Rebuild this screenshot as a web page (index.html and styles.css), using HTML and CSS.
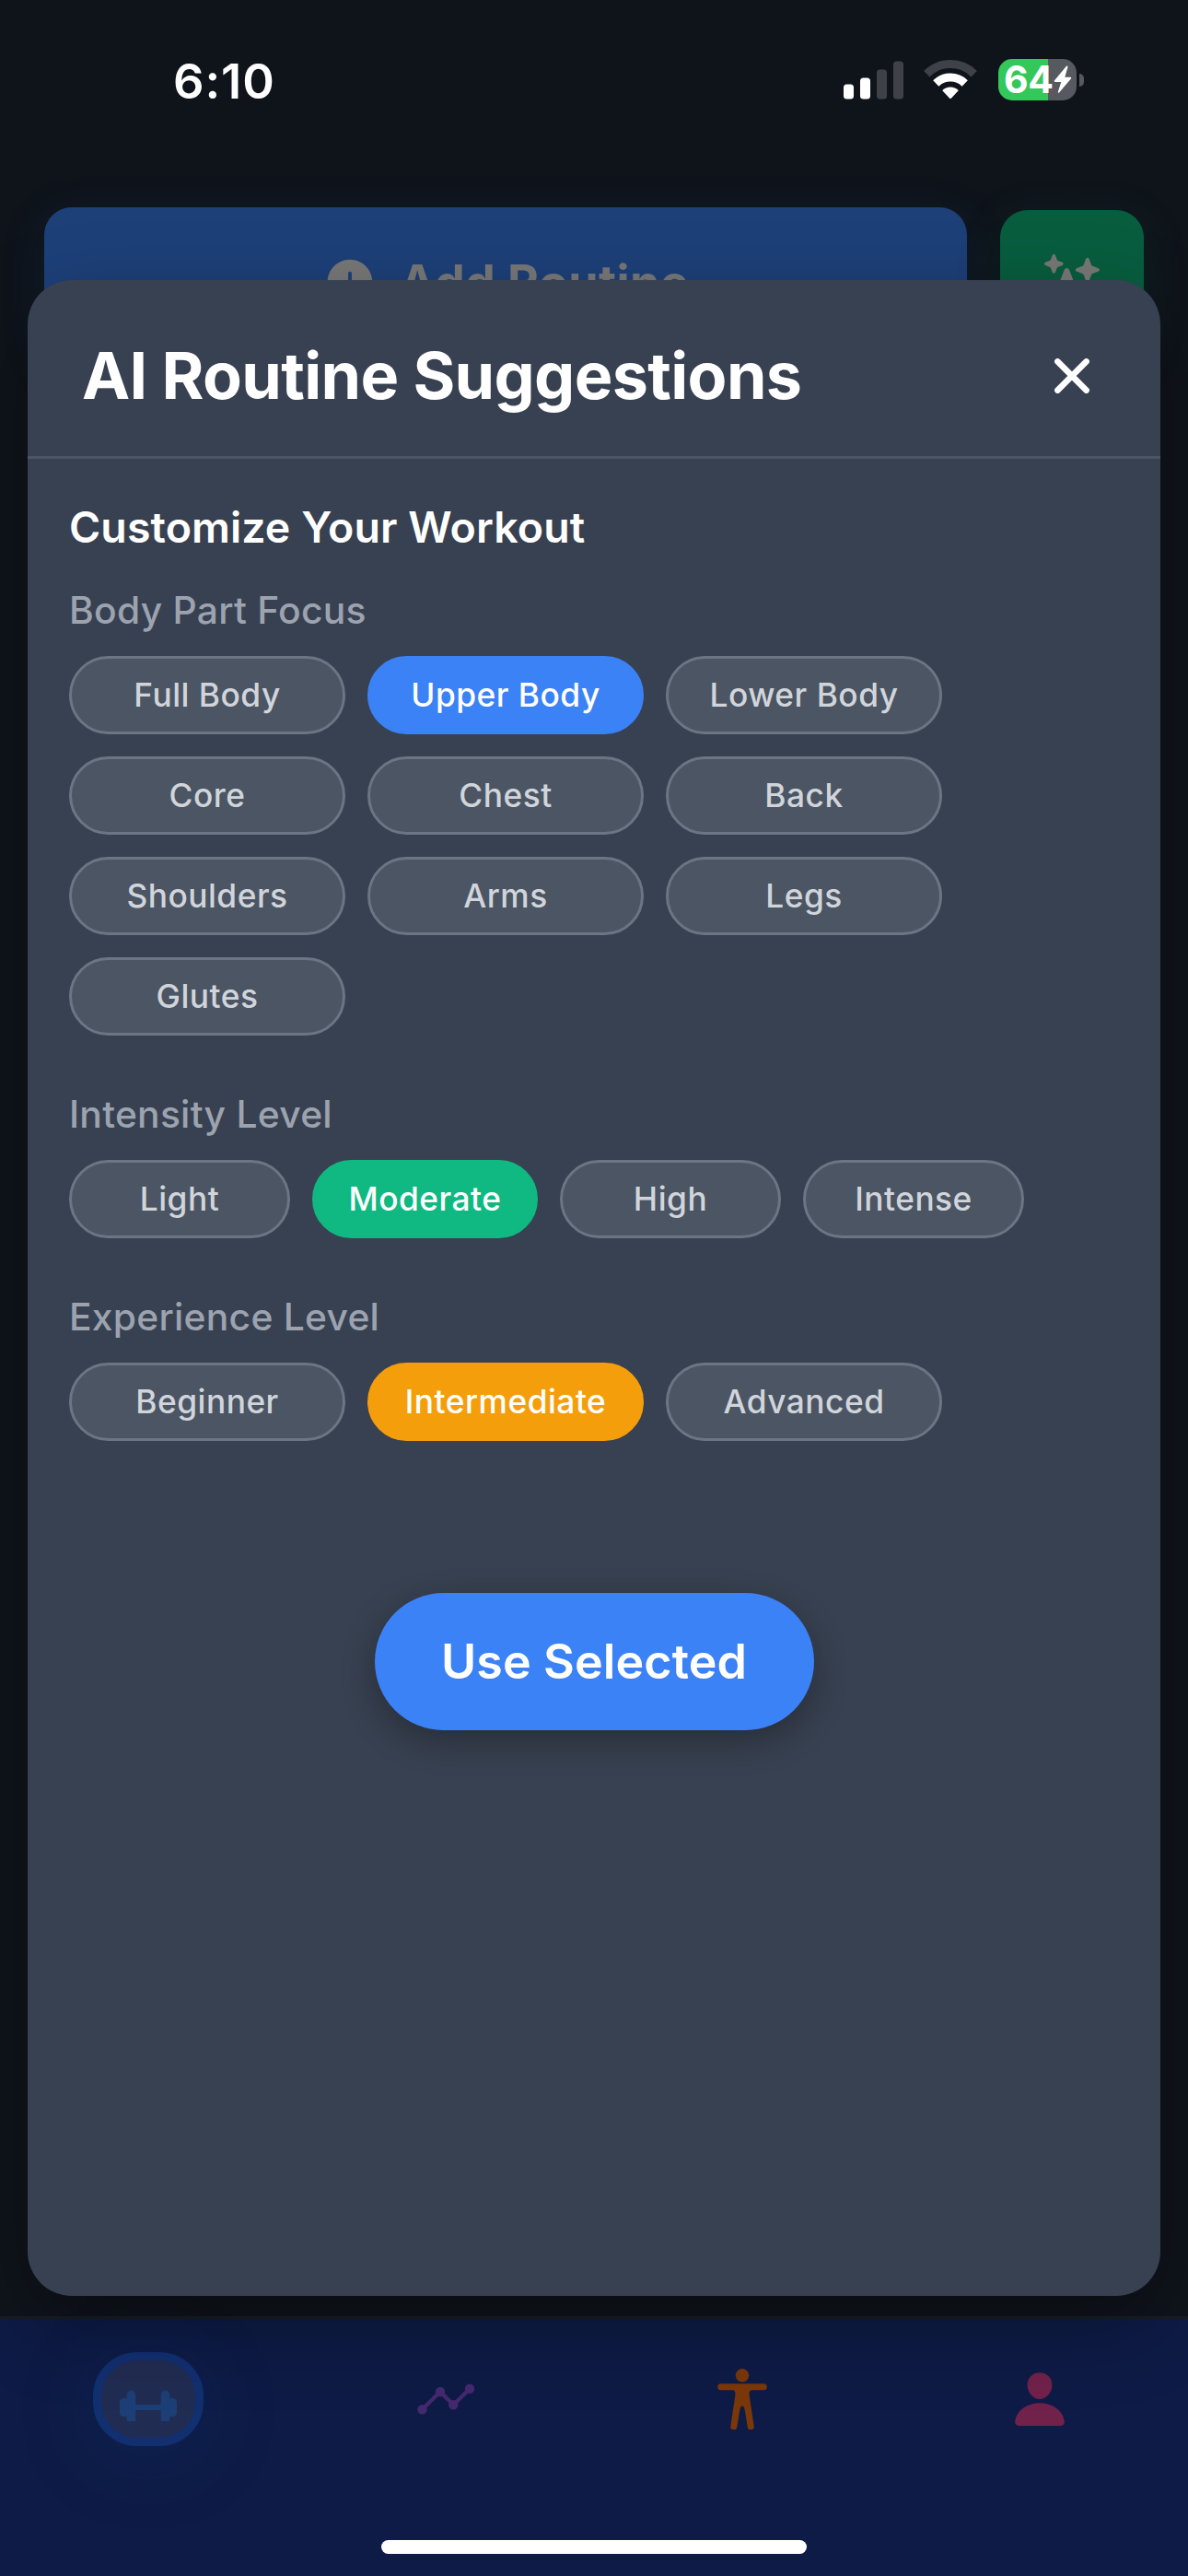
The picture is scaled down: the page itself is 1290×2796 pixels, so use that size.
FILE: index.html
```html
<!DOCTYPE html>
<html lang="en">
<head>
<meta charset="utf-8">
<title>AI Routine Suggestions</title>
<link rel="stylesheet" href="styles.css">
</head>
<body>
<div class="screen">
  <header class="status">
    <span class="time">6:10</span>
    <div class="indicators">
      <svg class="signal" width="66" height="42" viewBox="0 0 66 42">
        <rect x="0" y="25.500" width="11" height="16" rx="3.500" fill="#fff"/>
        <rect x="18" y="18.500" width="11" height="23" rx="3.500" fill="#fff"/>
        <rect x="36" y="9.500" width="11" height="32" rx="3.500" fill="#3f4149"/>
        <rect x="54" y="0.500" width="11" height="41" rx="3.500" fill="#3f4149"/>
      </svg>
      <svg class="wifi" width="58" height="43" viewBox="0 0 58 43">
        <path d="M3.300 15.200A36.500 36.500 0 0 1 54.700 15.200" fill="none" stroke="#3f4149" stroke-width="9"/>
        <path d="M13.300 25.500A22.500 22.500 0 0 1 44.700 25.500" fill="none" stroke="#fff" stroke-width="9"/>
        <path d="M20.200 33.200a12.500 12.500 0 0 1 17.600 0l-7.800 8.200q-1 1-2 0z" fill="#fff"/>
      </svg>
      <div class="battery"><span class="level">64</span>
        <svg class="bolt" width="20" height="31" viewBox="0 0 20 31"><path d="M14 .8 .9 16.400q-.8 1.300.6 1.500H8.300L4.900 28.500q-.4 2.200 1.400.8L19.100 14.200q.7-1.300-.7-1.500H12.300L15.400 2q.2-2-1.400-1.200z" fill="#fff"/></svg>
      </div>
      <span class="nub"></span>
    </div>
  </header>

  <div class="actions">
    <div class="add">
      <svg width="60" height="60" viewBox="0 0 512 512"><path fill="#787878" d="M256 48C141.310 48 48 141.310 48 256s93.310 208 208 208 208-93.310 208-208S370.690 48 256 48zm80 224h-64v64a16 16 0 0 1-32 0v-64h-64a16 16 0 0 1 0-32h64v-64a16 16 0 0 1 32 0v64h64a16 16 0 0 1 0 32z"/></svg>
      <span>Add Routine</span>
    </div>
    <div class="magic">
      <svg width="60" height="60" viewBox="0 0 512 512"><path fill="#787878" d="M208 512a24.840 24.840 0 0 1-23.340-16l-39.840-103.600a16.060 16.060 0 0 0-9.190-9.190L32 343.340a25 25 0 0 1 0-46.680l103.600-39.840a16.060 16.060 0 0 0 9.190-9.190L184.660 144a25 25 0 0 1 46.680 0l39.840 103.600a16.060 16.060 0 0 0 9.190 9.190l103 39.630a25.490 25.490 0 0 1 16.630 24.100 24.820 24.820 0 0 1-16 22.820l-103.600 39.840a16.060 16.060 0 0 0-9.190 9.190L231.340 496A24.840 24.840 0 0 1 208 512zM88 176a14.670 14.670 0 0 1-13.690-9.400l-16.860-43.840a7.280 7.280 0 0 0-4.210-4.210L9.400 101.690a14.670 14.670 0 0 1 0-27.380l43.840-16.860a7.310 7.310 0 0 0 4.210-4.210L74.160 9.790A15 15 0 0 1 86.230.11a14.670 14.670 0 0 1 15.460 9.290l16.860 43.840a7.310 7.310 0 0 0 4.210 4.210l43.840 16.860a14.670 14.670 0 0 1 0 27.380l-43.840 16.860a7.280 7.280 0 0 0-4.210 4.210l-16.860 43.840A14.670 14.670 0 0 1 88 176zm312 80a16 16 0 0 1-14.930-10.260l-22.840-59.370a8 8 0 0 0-4.600-4.600l-59.370-22.840a16 16 0 0 1 0-29.860l59.370-22.840a8 8 0 0 0 4.600-4.600l22.670-58.950a16.450 16.450 0 0 1 13.170-10.570 16 16 0 0 1 16.860 10.150l22.840 59.370a8 8 0 0 0 4.600 4.600l59.370 22.840a16 16 0 0 1 0 29.860l-59.370 22.840a8 8 0 0 0-4.600 4.600l-22.840 59.370A16 16 0 0 1 400 256z"/></svg>
    </div>
  </div>

  <nav class="tabs">
    <div class="tab"><div class="pill">
      <svg width="66" height="66" viewBox="0 0 66 66" fill="#1c3f78"><rect x="2" y="32" width="14" height="20" rx="4.500"/><rect x="50" y="32" width="14" height="20" rx="4.500"/><path d="M9.700 57V28.300a4.800 4.800 0 0 1 9.600 0V57zM46.700 57V28.300a4.800 4.800 0 0 1 9.600 0V57z"/><rect x="18" y="39" width="30" height="6"/></svg>
    </div></div>
    <div class="tab">
      <svg width="66" height="66" viewBox="0 0 66 66"><path d="M7.500 44.300 27 25l14.300 14.300L59 21.800" fill="none" stroke="#44296f" stroke-width="4.200"/><g fill="#44296f"><circle cx="7.500" cy="44.300" r="5.200"/><circle cx="27" cy="25" r="5.200"/><circle cx="41.300" cy="39.300" r="5.200"/><circle cx="59" cy="21.800" r="5.200"/></g></svg>
    </div>
    <div class="tab">
      <svg width="66" height="66" viewBox="0 0 66 66" fill="#7a370a"><circle cx="33" cy="7.300" r="7.200"/><path d="M9.700 16.300h46.600a3.500 3.500 0 0 1 0 7H43.500q-3 .2-3 4.500l5.200 34.500a3.500 3.500 0 0 1-7 1L35.700 44.500q-1-4-2.700-4t-2.700 4L27.300 63.300a3.500 3.500 0 0 1-7-1L25.500 27.800q0-4.300-3-4.500H9.700a3.500 3.500 0 0 1 0-7z"/></svg>
    </div>
    <div class="tab">
      <svg width="66" height="66" viewBox="0 0 512 512"><path fill="#71224a" d="M332.640 64.580C313.180 43.570 286 32 256 32c-30.160 0-57.430 11.500-76.800 32.380-19.580 21.110-29.120 49.800-26.880 80.780C156.760 206.280 203.270 256 256 256s99.160-49.710 103.670-110.820c2.270-30.700-7.330-59.330-27.030-80.600zM432 480H80a31 31 0 0 1-24.200-11.130c-6.500-7.770-9.120-18.380-7.180-29.110C57.060 392.940 83.400 353.610 124.800 326c36.780-24.510 83.370-38 131.200-38s94.420 13.500 131.200 38c41.400 27.600 67.740 66.930 76.180 113.750 1.940 10.730-.68 21.340-7.180 29.110A31 31 0 0 1 432 480z"/></svg>
    </div>
  </nav>

  <main class="modal">
    <div class="modal-head">
      <h1>AI Routine Suggestions</h1>
      <svg class="close" width="38" height="38" viewBox="0 0 38 38"><path d="M3.400 3.400l31.200 31.200M34.600 3.400L3.400 34.600" stroke="#fff" stroke-width="6.600" stroke-linecap="round"/></svg>
    </div>
    <div class="modal-body">
      <h2>Customize Your Workout</h2>
      <section class="group">
        <h3>Body Part Focus</h3>
        <div class="chips">
          <span class="chip">Full Body</span>
          <span class="chip blue">Upper Body</span>
          <span class="chip">Lower Body</span>
          <span class="chip">Core</span>
          <span class="chip">Chest</span>
          <span class="chip">Back</span>
          <span class="chip">Shoulders</span>
          <span class="chip">Arms</span>
          <span class="chip">Legs</span>
          <span class="chip">Glutes</span>
        </div>
      </section>
      <section class="group">
        <h3>Intensity Level</h3>
        <div class="chips levels">
          <span class="chip">Light</span>
          <span class="chip green">Moderate</span>
          <span class="chip">High</span>
          <span class="chip">Intense</span>
        </div>
      </section>
      <section class="group">
        <h3>Experience Level</h3>
        <div class="chips">
          <span class="chip">Beginner</span>
          <span class="chip amber">Intermediate</span>
          <span class="chip">Advanced</span>
        </div>
      </section>
      <button class="use">Use Selected</button>
    </div>
  </main>
  <div class="home"></div>
</div>
</body>
</html>
```
FILE: styles.css
```css
* { box-sizing: border-box; }
body { margin: 0; background: #0f141b; font-family: Inter, "Liberation Sans", sans-serif; color: #fff; }
svg { display: block; flex: none; }
h1, h2, h3 { margin: 0; }

.screen { position: relative; width: 1290px; height: 2796px; overflow: hidden; display: flex; flex-direction: column; background: #0f141b; }

.status { height: 225px; padding: 64px 113px 0 188px; display: flex; justify-content: space-between; align-items: flex-start; }
.time { font-size: 52.500px; font-weight: 600; line-height: 48px; letter-spacing: .9px; }
.indicators { display: flex; align-items: center; height: 45px; }
.wifi { margin-left: 21px; }
.battery { position: relative; width: 85px; height: 45px; margin-left: 23px; border-radius: 15px; background: linear-gradient(90deg, #34c759 54px, #56595f 54px); display: flex; align-items: center; padding-left: 6px; }
.level { font-size: 41px; font-weight: 700; line-height: 45px; letter-spacing: -.5px; }
.bolt { position: absolute; left: 60px; top: 7px; }
.nub { width: 5px; height: 14px; margin-left: 3px; border-radius: 0 5px 5px 0; background: #56595f; }

.actions { display: flex; gap: 36px; padding: 0 48px; align-items: center; }
.add { width: 1002px; height: 162px; border-radius: 30px; background: #1d4079; box-shadow: 0 12px 48px rgba(29, 64, 121, .2); display: flex; align-items: center; justify-content: center; gap: 24px; color: #787878; font-size: 52px; font-weight: 700; letter-spacing: .4px; }
.magic { width: 156px; height: 156px; border-radius: 30px; background: #085d3f; box-shadow: 0 12px 48px rgba(8, 93, 63, .2); display: flex; align-items: center; justify-content: center; }

.tabs { margin-top: auto; height: 282px; border-top: 3px solid #191d22; background: #0e1b46; display: grid; grid-template-columns: repeat(4, 1fr); }
.tab { height: 174px; display: flex; align-items: center; justify-content: center; }
.pill { width: 120px; height: 102px; border: 9px solid #122f70; border-radius: 48px; background: #212c52; box-shadow: 0 12px 72px 6px rgba(16, 52, 112, .25); display: flex; align-items: center; justify-content: center; }

.modal { position: absolute; left: 30px; top: 304px; width: 1230px; height: 2188px; border-radius: 48px; background: #384151; box-shadow: 0 30px 90px rgba(0, 0, 0, .3); }
.modal-head { height: 194px; padding: 16px 77px 0 59px; border-bottom: 3px solid #4b5563; display: flex; align-items: center; justify-content: space-between; }
h1 { font-size: 70px; font-weight: 700; line-height: 84px; letter-spacing: -.65px; }
.modal-body { padding: 45px 45px 0; display: flex; flex-direction: column; }
h2 { font-size: 46.500px; font-weight: 600; line-height: 58px; margin-bottom: 36px; letter-spacing: .1px; }
h3 { font-size: 40.800px; font-weight: 500; line-height: 50px; color: #9ca3af; margin-bottom: 25px; letter-spacing: .25px; }
.group + .group { margin-top: 60px; }
.chips { display: grid; grid-template-columns: repeat(3, 300px); gap: 24px; }
.levels { grid-template-columns: 240px 245px 240px 240px; }
.chip { height: 85px; border: 3px solid #6b7583; border-radius: 43px; background: #4b5563; color: #d1d5db; font-size: 35.300px; font-weight: 500; letter-spacing: .5px; display: flex; align-items: center; justify-content: center; }
.chip.blue { background: #3b82f6; border-color: #3b82f6; color: #fff; }
.chip.green { background: #10b981; border-color: #10b981; color: #fff; }
.chip.amber { background: #f59e0b; border-color: #f59e0b; color: #fff; }
.use { align-self: center; margin-top: 165px; width: 477px; height: 149px; padding: 0; border: 0; border-radius: 75px; background: #3b82f6; color: #fff; font: 600 52px Inter, "Liberation Sans", sans-serif; letter-spacing: .1px; box-shadow: 0 12px 36px rgba(0, 0, 0, .3); }
.home { position: absolute; left: 414px; bottom: 24px; width: 462px; height: 15px; border-radius: 8px; background: #fff; }
```
